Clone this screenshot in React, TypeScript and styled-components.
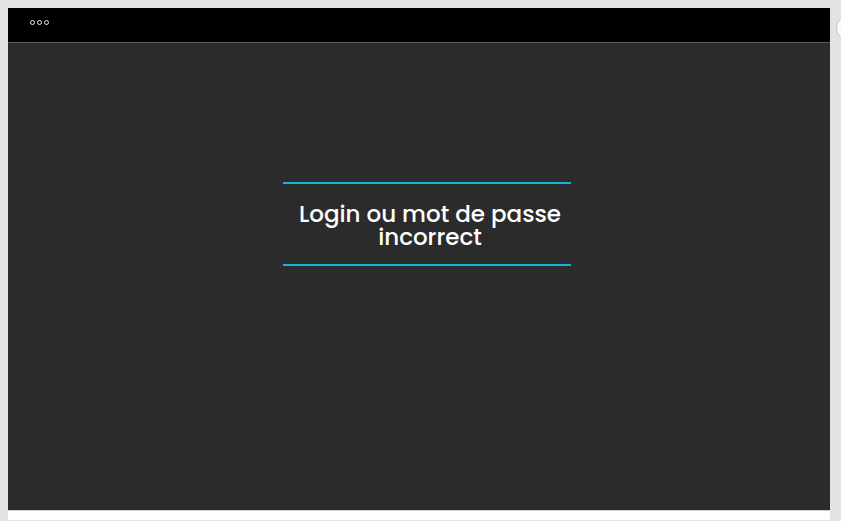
import React from "react";
import styled, { createGlobalStyle } from "styled-components";

const Global = createGlobalStyle`
  html, body { margin: 0; padding: 0; background: #e3e3e3; overflow: hidden; }
  body { width: 841px; height: 521px; }
`;

const Page = styled.div`
  position: relative;
  width: 841px;
  height: 521px;
  padding: 8px 0 0 8px;
  box-sizing: border-box;
`;

const Frame = styled.div`
  width: 822px;
  display: flex;
  flex-direction: column;
  background: #ffffff;
`;

const Header = styled.header`
  height: 35px;
  background: #000;
  border-bottom: 1px solid #5f5f5f;
  display: flex;
  align-items: center;
  padding-left: 22px;
  padding-bottom: 5px;
  box-sizing: border-box;
  gap: 2px;
`;

const Dot = styled.span`
  width: 3px;
  height: 3px;
  border: 1px solid #e8e8e8;
  border-radius: 50%;
`;

const Panel = styled.main`
  height: 468px;
  background: #2b2b2b;
  border-bottom: 1px solid #cfcfcf;
  display: flex;
  justify-content: center;
  padding-left: 16px;
  padding-top: 139px;
  box-sizing: border-box;
`;

const Message = styled.div`
  width: 288px;
  height: 84px;
  border-top: 2px solid #0fb6d6;
  border-bottom: 2px solid #0fb6d6;
  box-sizing: border-box;
  display: flex;
  align-items: center;
  justify-content: center;
`;

const Title = styled.h2`
  margin: 0;
  padding-left: 6px;
  padding-top: 3px;
  color: #ffffff;
  font-family: "Poppins", "Lato", "Open Sans", sans-serif;
  font-weight: 500;
  font-size: 23px;
  line-height: 23px;
  text-align: center;
`;

const Footer = styled.div`
  height: 9px;
  background: #fff;
`;

const ScrollKnob = styled.div`
  position: absolute;
  left: 836px;
  top: 16px;
  width: 22px;
  height: 22px;
  border-radius: 50%;
  background: #fafafa;
  border: 1px solid #c8c8c8;
`;

export default function App() {
  return (
    <>
      <Global />
      <Page>
        <Frame>
          <Header>
            <Dot />
            <Dot />
            <Dot />
          </Header>
          <Panel>
            <Message>
              <Title>
                Login ou mot de passe
                <br />
                incorrect
              </Title>
            </Message>
          </Panel>
          <Footer />
        </Frame>
        <ScrollKnob />
      </Page>
    </>
  );
}
